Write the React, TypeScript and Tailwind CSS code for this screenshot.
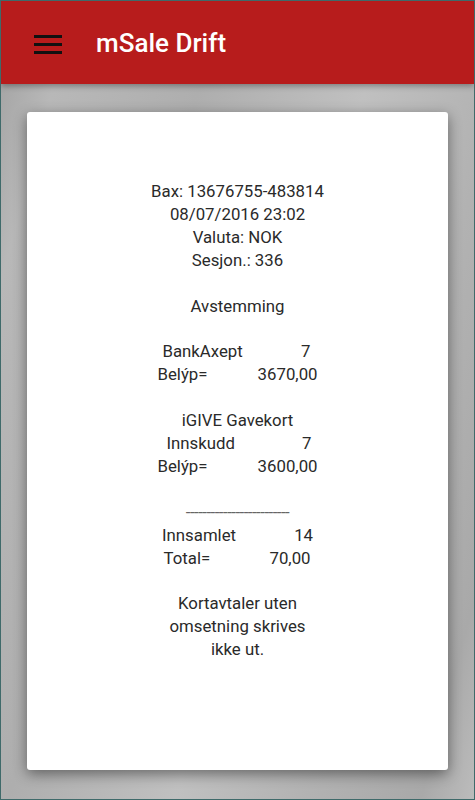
import React from "react";

const Row = ({ l, r, w }: { l: string; r: string; w: string }) => (
  <div className={`flex justify-between ${w}`}>
    <span>{l}</span>
    <span>{r}</span>
  </div>
);

export default function App() {
  return (
    <div
      className="w-[475px] h-[800px] border border-[#3f6a6a] flex flex-col overflow-hidden"
      style={{ fontFamily: "Roboto, 'Noto Sans', sans-serif" }}
    >
      <div className="h-[83px] shrink-0 bg-[#b71c1c] flex items-center shadow-[0_2px_6px_rgba(0,0,0,0.35)] relative z-10">
        <div className="ml-[33px] w-[28px] flex flex-col gap-[5px] mt-[3px]">
          <div className="h-[3px] bg-[#111]" />
          <div className="h-[3px] bg-[#111]" />
          <div className="h-[3px] bg-[#111]" />
        </div>
        <div className="ml-[34px] text-white text-[26px] font-medium mt-[1px]">mSale Drift</div>
      </div>
      <div className="flex-1 bg-[linear-gradient(105deg,#a6a6a6_0%,#b8b8b8_8%,#aeaeae_30%,#c0c0c0_55%,#b2b2b2_75%,#a9a9a9_92%,#bcbcbc_100%)] pt-[28px] px-[26px]">
        <div className="bg-white rounded-[3px] h-[658px] shadow-[0_4px_14px_rgba(0,0,0,0.45)] pt-[68px] flex flex-col items-center text-[#2a2a2a] text-[16.8px] leading-[22.9px]">
          <div>Bax: 13676755-483814</div>
          <div>08/07/2016 23:02</div>
          <div>Valuta: NOK</div>
          <div>Sesjon.: 336</div>
          <div>&nbsp;</div>
          <div>Avstemming</div>
          <div>&nbsp;</div>
          <Row l="BankAxept" r="7" w="w-[148px] ml-[-2px]" />
          <Row l="Belýp=" r="3670,00" w="w-[160px]" />
          <div>&nbsp;</div>
          <div>iGIVE Gavekort</div>
          <Row l="Innskudd" r="7" w="w-[145px] ml-[3px]" />
          <Row l="Belýp=" r="3600,00" w="w-[160px]" />
          <div>&nbsp;</div>
          <div className="text-[#666] tracking-[-0.5px]">{"-".repeat(25)}</div>
          <Row l="Innsamlet" r="14" w="w-[151px]" />
          <Row l="Total=" r="70,00" w="w-[147px] ml-[-1px]" />
          <div>&nbsp;</div>
          <div>Kortavtaler uten</div>
          <div>omsetning skrives</div>
          <div>ikke ut.</div>
        </div>
      </div>
    </div>
  );
}
